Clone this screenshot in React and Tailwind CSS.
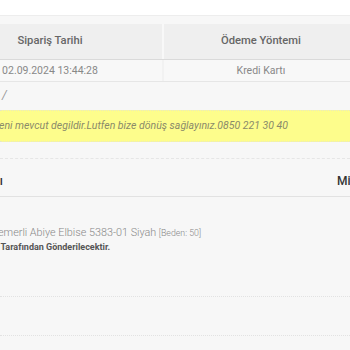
import React from "react";

const Cell = ({ className, children }) => (
  <div className={`flex items-center justify-center shrink-0 ${className}`}>{children}</div>
);

export default function App() {
  return (
    <div className="w-[350px] h-[350px] overflow-hidden bg-[#f7f7f7] font-['Roboto',sans-serif]">
      <div className="h-4 bg-white border-b border-[#ededed]" />
      <div className="h-[8px]" />

      {/* order info table */}
      <div className="w-[420px] -ml-[62px]">
        <div className="flex h-9 bg-[#efefef] border-b border-[#dadada]">
          <Cell className="w-[224px] text-[11.2px] font-medium text-[#666]">Sipariş Tarihi</Cell>
          <Cell className="w-[196px] border-l-2 border-[#f8f8f8] text-[11.2px] font-medium text-[#666]">
            Ödeme Yöntemi
          </Cell>
        </div>
        <div className="flex h-[22px] bg-[#f8f8f8] border-b border-[#e6e6e6]">
          <Cell className="w-[224px] text-[10.5px] text-[#888]">02.09.2024 13:44:28</Cell>
          <Cell className="w-[196px] border-l-2 border-[#f2f2f2] text-[10.5px] text-[#888]">Kredi Kartı</Cell>
        </div>
      </div>

      <div className="h-[28px] pt-[4px] pl-[2px] text-[12px] italic text-[#999]">/</div>

      <div className="h-[32px] bg-[#fdfd8c] border-y border-dotted border-[#e8e8c0] flex items-center whitespace-nowrap">
        <span className="-ml-[1px] text-[10.5px] italic text-[#8a8a6a]">
          eni mevcut degildir.Lutfen bize dönüş sağlayınız.0850 221 30 40
        </span>
      </div>

      <div className="h-[17px] border-b border-dashed border-[#e6e6e6]" />

      {/* products table */}
      <div className="flex h-[38px] pt-[14px] items-start justify-between border-b border-[#e2e2e2] text-[12px] leading-[16px] font-medium text-[#333] whitespace-nowrap">
        <span className="w-[3px] overflow-hidden flex justify-end">
          <span>Adı</span>
        </span>
        <span className="w-[13px]">Miktar</span>
      </div>

      <div className="h-[100px] pt-[28px] border-b border-dotted border-[#e2e2e2] whitespace-nowrap">
        <div className="-ml-[2px] text-[10.8px] leading-[15px] font-light text-[#888]">
          emerli Abiye Elbise 5383-01 Siyah <span className="text-[8.8px]">[Beden: 50]</span>
        </div>
        <div className="-ml-[4px] text-[9px] leading-[12px] font-bold text-[#555]">
          ı Tarafından Gönderilecektir.
        </div>
      </div>

      <div className="h-[39px] border-b border-dotted border-[#e2e2e2]" />
    </div>
  );
}
